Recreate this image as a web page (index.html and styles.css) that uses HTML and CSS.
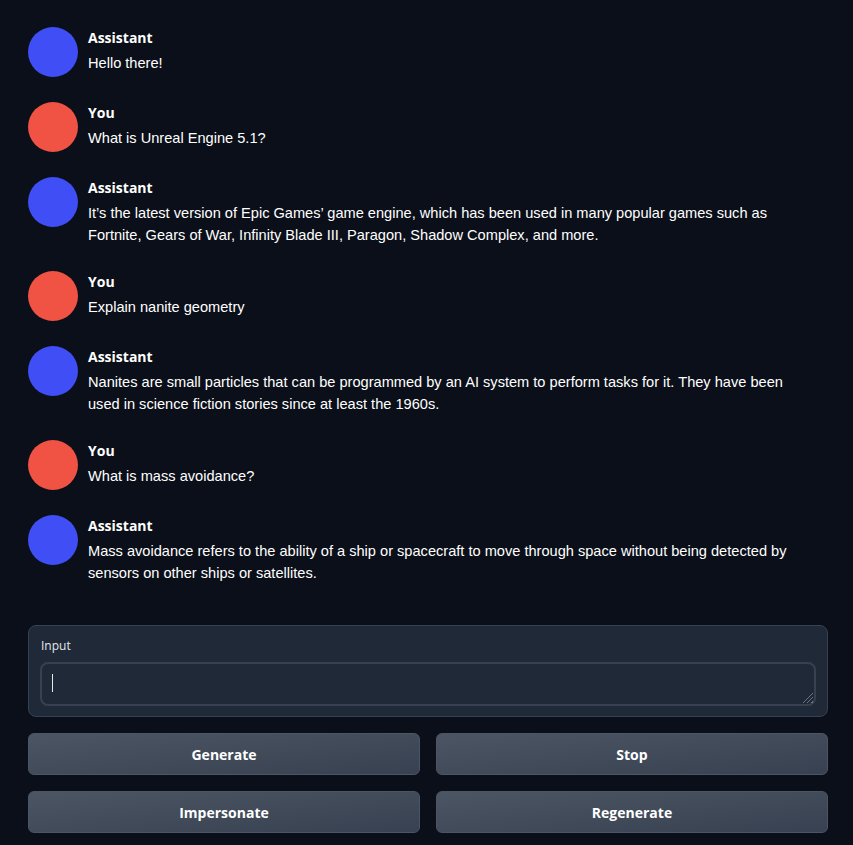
FILE: index.html
```html
<!DOCTYPE html>
<html>
<head>
<meta charset="utf-8">
<link rel="stylesheet" href="styles.css">
</head>
<body>
<div class="app">
  <div class="chat">
    <div class="msg">
      <div class="avatar bot"></div>
      <div class="body"><div class="name">Assistant</div><div class="text">Hello there!</div></div>
    </div>
    <div class="msg">
      <div class="avatar user"></div>
      <div class="body"><div class="name">You</div><div class="text">What is Unreal Engine 5.1?</div></div>
    </div>
    <div class="msg">
      <div class="avatar bot"></div>
      <div class="body"><div class="name">Assistant</div><div class="text">It’s the latest version of Epic Games’ game engine, which has been used in many popular games such as Fortnite, Gears of War, Infinity Blade III, Paragon, Shadow Complex, and more.</div></div>
    </div>
    <div class="msg">
      <div class="avatar user"></div>
      <div class="body"><div class="name">You</div><div class="text">Explain nanite geometry</div></div>
    </div>
    <div class="msg">
      <div class="avatar bot"></div>
      <div class="body"><div class="name">Assistant</div><div class="text">Nanites are small particles that can be programmed by an AI system to perform tasks for it. They have been used in science fiction stories since at least the 1960s.</div></div>
    </div>
    <div class="msg">
      <div class="avatar user"></div>
      <div class="body"><div class="name">You</div><div class="text">What is mass avoidance?</div></div>
    </div>
    <div class="msg">
      <div class="avatar bot"></div>
      <div class="body"><div class="name">Assistant</div><div class="text">Mass avoidance refers to the ability of a ship or spacecraft to move through space without being detected by sensors on other ships or satellites.</div></div>
    </div>
  </div>
  <div class="panel">
    <label class="label" for="inp">Input</label>
    <div class="input"><span class="caret"></span></div>
  </div>
  <div class="buttons">
    <button class="btn">Generate</button>
    <button class="btn">Stop</button>
    <button class="btn">Impersonate</button>
    <button class="btn">Regenerate</button>
  </div>
</div>
</body>
</html>
```
FILE: styles.css
```css
html, body {
  margin: 0;
  padding: 0;
  background: #0b0f19;
}
.app {
  padding: 27px 25px 0 28px;
  display: flex;
  flex-direction: column;
}
.chat {
  display: flex;
  flex-direction: column;
  gap: 25px;
}
.msg {
  display: flex;
  align-items: flex-start;
  gap: 10px;
}
.avatar {
  width: 50px;
  height: 50px;
  border-radius: 50%;
  flex: none;
}
.avatar.bot { background: #3f4ff5; }
.avatar.user { background: #f05243; }
.body {
  display: flex;
  flex-direction: column;
  gap: 4px;
  padding-top: 1px;
  padding-right: 18px;
}
.name {
  font-family: "Open Sans", sans-serif;
  font-weight: 700;
  font-size: 14px;
  line-height: 20px;
  color: #ffffff;
}
.text {
  font-family: "Liberation Sans", Arial, sans-serif;
  font-size: 14.6px;
  line-height: 22px;
  color: #ffffff;
}
.panel {
  margin-top: 41px;
  background: #1f2937;
  border: 1px solid #374151;
  border-radius: 8px;
  padding: 12px 11px 10px 11px;
  display: flex;
  flex-direction: column;
  gap: 8px;
}
.label {
  font-family: "Open Sans", sans-serif;
  font-size: 12px;
  line-height: 16px;
  color: #e5e7eb;
  padding-left: 1px;
}
.input {
  position: relative;
  height: 44px;
  box-sizing: border-box;
  background: #1f2937;
  border: 2px solid #374151;
  border-radius: 8px;
  padding: 10px 10px;
}
.input::after {
  content: "";
  position: absolute;
  right: 1px;
  bottom: 1px;
  width: 11px;
  height: 11px;
  background: repeating-linear-gradient(135deg, transparent 0 2px, #6b7280 2px 3px);
  clip-path: polygon(100% 0, 100% 100%, 0 100%);
}
.caret {
  display: block;
  width: 1px;
  height: 18px;
  background: #e5e7eb;
}
.buttons {
  margin-top: 16px;
  display: grid;
  grid-template-columns: 1fr 1fr;
  gap: 16px;
}
.btn {
  height: 42px;
  border: 1px solid #4b5563;
  border-radius: 6px;
  background: linear-gradient(to bottom right, #4b5563, #374151);
  color: #fff;
  font-family: "Open Sans", sans-serif;
  font-weight: 700;
  font-size: 14px;
}
```
